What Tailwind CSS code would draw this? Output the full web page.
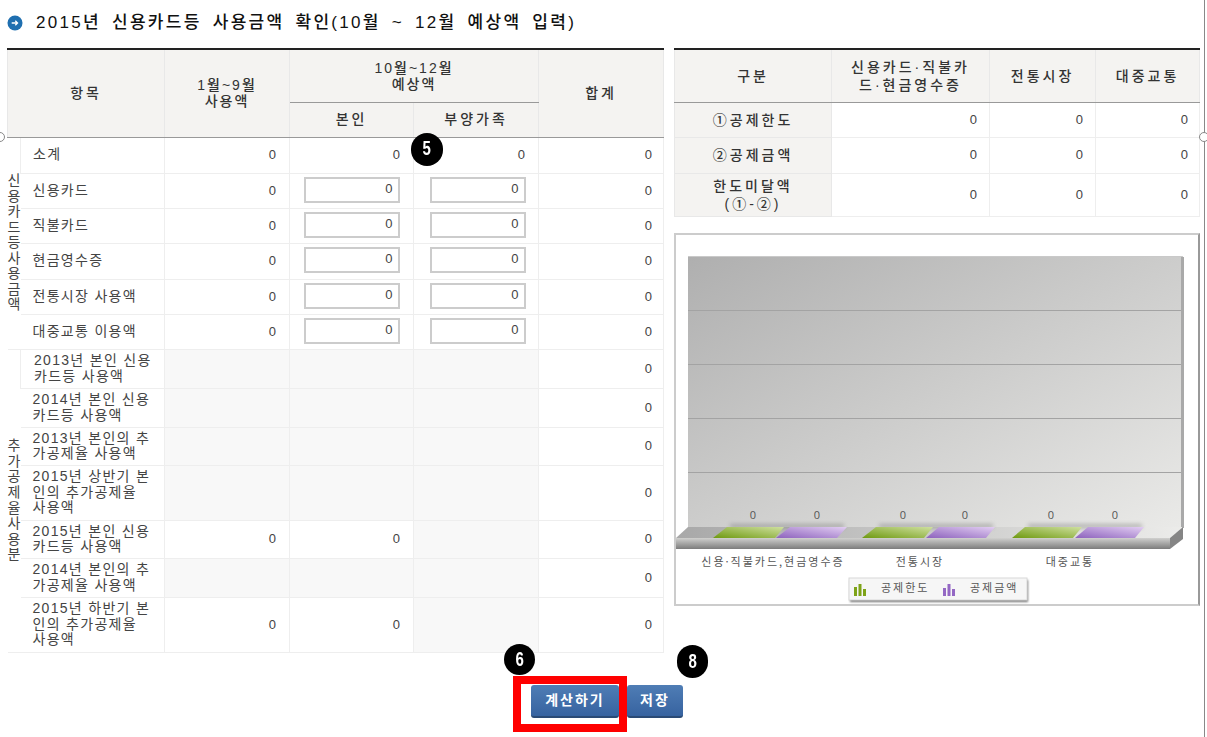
<!DOCTYPE html>
<html lang="ko">
  <head>
    <meta charset="UTF-8" />
    <title>2015년 신용카드등 사용금액 확인</title>
    <script src="https://cdn.jsdelivr.net/npm/@tailwindcss/browser@4"></script>
  </head>
  <body class="bg-white font-['Liberation_Sans','Noto_Sans_CJK_KR',sans-serif] text-[13px] text-[#444]">
    <div class="relative h-[737px] w-[1207px] overflow-hidden pl-[7px]">
      <!-- 제목 -->
      <div class="flex h-[46px] items-center gap-[6px] mb-[2px]">
        <svg class="w-[16px] h-[16px]" viewBox="0 0 17 17">
          <circle cx="8.5" cy="8.5" r="8" fill="#1f6fb0" />
          <path d="M5 8.5h6M8.8 6.2l2.4 2.3-2.4 2.3" fill="none" stroke="#fff" stroke-width="1.4" />
        </svg>
        <h1 class="ml-[7px] text-[17px] font-medium text-[#111] tracking-[2.3px] [word-spacing:4px]">2015년 신용카드등 사용금액 확인(10월 ~ 12월 예상액 입력)</h1>
      </div>

      <div class="flex gap-[10px] items-start">
        <!-- 왼쪽 표 -->
        <table class="w-[656px] table-fixed text-[14px] tracking-[1.3px] [&_td]:border [&_td]:border-[#eee] [&_th]:border [&_th]:border-[#e8e8e8] [&_th]:bg-[#f4f3f1] [&_td.text-right]:text-[13px] [&_td.text-right]:tracking-normal [&_input]:text-[13px] [&_input]:tracking-normal [&_input]:mb-[2px] [&_input]:pb-[3px]">
          <colgroup>
            <col class="w-[13px]" /><col class="w-[144px]" /><col class="w-[125px]" /><col class="w-[124px]" /><col class="w-[125px]" /><col class="w-[125px]" />
          </colgroup>
          <thead class="border-t-2 border-[#222] font-medium text-[#333] tracking-[3px]">
            <tr class="h-[53px]">
              <th colspan="2" rowspan="2" class="font-medium !border-b-[#999]">항목</th>
              <th rowspan="2" class="font-medium leading-[16px] tracking-[2px] !border-b-[#999]">1월~9월<br />사용액</th>
              <th colspan="2" class="font-medium leading-[16px] tracking-[2px] !border-b-[#999]">10월~12월<br />예상액</th>
              <th rowspan="2" class="font-medium !border-b-[#999]">합계</th>
            </tr>
            <tr class="h-[35px]">
              <th class="font-medium !border-b-[#999]">본인</th>
              <th class="font-medium !border-b-[#999]">부양가족</th>
            </tr>
          </thead>
          <tbody class="leading-[15.5px]">
            <tr class="h-[36px]">
              <td rowspan="6" class="!border-x-0 break-all text-center tracking-normal leading-[15.5px]">신용카드등사용금액</td>
              <td class="pl-[12px]">소계</td>
              <td class="text-right pr-[13px]">0</td><td class="text-right pr-[13px]">0</td><td class="text-right pr-[13px]">0</td><td class="text-right pr-[11px]">0</td>
            </tr>
            <tr class="h-[35px]">
              <td class="pl-[12px] !border-l-0">신용카드</td>
              <td class="text-right pr-[13px]">0</td>
              <td class="text-center"><input value="0" class="w-[96px] h-[26px] border-2 border-[#ccc] text-right pr-[5px] align-middle" /></td>
              <td class="text-center"><input value="0" class="ml-[3px] w-[96px] h-[26px] border-2 border-[#ccc] text-right pr-[5px] align-middle" /></td>
              <td class="text-right pr-[11px]">0</td>
            </tr>
            <tr class="h-[35px]">
              <td class="pl-[12px] !border-l-0">직불카드</td>
              <td class="text-right pr-[13px]">0</td>
              <td class="text-center"><input value="0" class="w-[96px] h-[26px] border-2 border-[#ccc] text-right pr-[5px] align-middle" /></td>
              <td class="text-center"><input value="0" class="ml-[3px] w-[96px] h-[26px] border-2 border-[#ccc] text-right pr-[5px] align-middle" /></td>
              <td class="text-right pr-[11px]">0</td>
            </tr>
            <tr class="h-[36px]">
              <td class="pl-[12px] !border-l-0">현금영수증</td>
              <td class="text-right pr-[13px]">0</td>
              <td class="text-center"><input value="0" class="w-[96px] h-[26px] border-2 border-[#ccc] text-right pr-[5px] align-middle" /></td>
              <td class="text-center"><input value="0" class="ml-[3px] w-[96px] h-[26px] border-2 border-[#ccc] text-right pr-[5px] align-middle" /></td>
              <td class="text-right pr-[11px]">0</td>
            </tr>
            <tr class="h-[35px]">
              <td class="pl-[12px] !border-l-0">전통시장 사용액</td>
              <td class="text-right pr-[13px]">0</td>
              <td class="text-center"><input value="0" class="w-[96px] h-[26px] border-2 border-[#ccc] text-right pr-[5px] align-middle" /></td>
              <td class="text-center"><input value="0" class="ml-[3px] w-[96px] h-[26px] border-2 border-[#ccc] text-right pr-[5px] align-middle" /></td>
              <td class="text-right pr-[11px]">0</td>
            </tr>
            <tr class="h-[35px]">
              <td class="pl-[12px] !border-l-0">대중교통 이용액</td>
              <td class="text-right pr-[13px]">0</td>
              <td class="text-center"><input value="0" class="w-[96px] h-[26px] border-2 border-[#ccc] text-right pr-[5px] align-middle" /></td>
              <td class="text-center"><input value="0" class="ml-[3px] w-[96px] h-[26px] border-2 border-[#ccc] text-right pr-[5px] align-middle" /></td>
              <td class="text-right pr-[11px]">0</td>
            </tr>
            <tr class="h-[39px]">
              <td rowspan="7" class="!border-x-0 break-all text-center tracking-normal leading-[15.6px]">추가공제율사용분</td>
              <td class="pl-[13px]">2013년 본인 신용<br />카드등 사용액</td>
              <td class="bg-[#f8f8f8]"></td><td class="bg-[#f8f8f8]"></td><td class="bg-[#f8f8f8]"></td>
              <td class="text-right pr-[11px]">0</td>
            </tr>
            <tr class="h-[39px]">
              <td class="pl-[12px] !border-l-0">2014년 본인 신용<br />카드등 사용액</td>
              <td class="bg-[#f8f8f8]"></td><td class="bg-[#f8f8f8]"></td><td class="bg-[#f8f8f8]"></td>
              <td class="text-right pr-[11px]">0</td>
            </tr>
            <tr class="h-[38px]">
              <td class="pl-[12px] !border-l-0">2013년 본인의 추<br />가공제율 사용액</td>
              <td class="bg-[#f8f8f8]"></td><td class="bg-[#f8f8f8]"></td><td class="bg-[#f8f8f8]"></td>
              <td class="text-right pr-[11px]">0</td>
            </tr>
            <tr class="h-[55px]">
              <td class="pl-[12px] !border-l-0">2015년 상반기 본<br />인의 추가공제율<br />사용액</td>
              <td class="bg-[#f8f8f8]"></td><td class="bg-[#f8f8f8]"></td><td class="bg-[#f8f8f8]"></td>
              <td class="text-right pr-[11px]">0</td>
            </tr>
            <tr class="h-[38px]">
              <td class="pl-[12px] !border-l-0">2015년 본인 신용<br />카드등 사용액</td>
              <td class="text-right pr-[13px]">0</td><td class="text-right pr-[13px]">0</td><td class="bg-[#f8f8f8]"></td>
              <td class="text-right pr-[11px]">0</td>
            </tr>
            <tr class="h-[39px]">
              <td class="pl-[12px] !border-l-0">2014년 본인의 추<br />가공제율 사용액</td>
              <td class="bg-[#f8f8f8]"></td><td class="bg-[#f8f8f8]"></td><td class="bg-[#f8f8f8]"></td>
              <td class="text-right pr-[11px]">0</td>
            </tr>
            <tr class="h-[55px]">
              <td class="pl-[12px] !border-l-0">2015년 하반기 본<br />인의 추가공제율<br />사용액</td>
              <td class="text-right pr-[13px]">0</td><td class="text-right pr-[13px]">0</td><td class="bg-[#f8f8f8]"></td>
              <td class="text-right pr-[11px]">0</td>
            </tr>
          </tbody>
        </table>

        <!-- 오른쪽 -->
        <div class="w-[526px]">
          <table class="w-[525px] table-fixed text-[14px] tracking-[3px] [&_td]:border [&_td]:border-[#eee] [&_td]:text-[13px] [&_td]:tracking-normal [&_th]:border [&_th]:border-[#e8e8e8] [&_th]:bg-[#f4f3f1] [&_th]:font-medium [&_th]:leading-[18px] [&_th]:text-[#333]">
            <colgroup>
              <col class="w-[157px]" /><col class="w-[158px]" /><col class="w-[106px]" /><col class="w-[104px]" />
            </colgroup>
            <thead class="border-t-2 border-[#222]">
              <tr class="h-[53px]">
                <th class="!border-b-[#999]">구분</th>
                <th class="!border-b-[#999]">신용카드·직불카<br />드·현금영수증</th>
                <th class="!border-b-[#999]">전통시장</th>
                <th class="!border-b-[#999]">대중교통</th>
              </tr>
            </thead>
            <tbody>
              <tr class="h-[35px]">
                <th>①공제한도</th>
                <td class="text-right pr-[12px]">0</td><td class="text-right pr-[12px]">0</td><td class="text-right pr-[11px]">0</td>
              </tr>
              <tr class="h-[36px]">
                <th>②공제금액</th>
                <td class="text-right pr-[12px]">0</td><td class="text-right pr-[12px]">0</td><td class="text-right pr-[11px]">0</td>
              </tr>
              <tr class="h-[43px]">
                <th>한도미달액<br />(①-②)</th>
                <td class="text-right pr-[12px]">0</td><td class="text-right pr-[12px]">0</td><td class="text-right pr-[11px]">0</td>
              </tr>
            </tbody>
          </table>

          <!-- 차트 -->
          <div class="mt-[16px] h-[373px] border-2 border-[#ccc] border-r-[#999] overflow-hidden">
            <svg class="block -ml-[2px] -mt-[2px] w-[526px] h-[373px]" viewBox="674 233 526 373">
              <defs>
                <linearGradient id="wall" x1="0" y1="0" x2="1" y2="1">
                  <stop offset="0" stop-color="#afafaf" />
                  <stop offset="1" stop-color="#eaeae8" />
                </linearGradient>
                <linearGradient id="floorTop" x1="0" y1="0" x2="1" y2="0">
                  <stop offset="0" stop-color="#a8a8a8" />
                  <stop offset="1" stop-color="#ececea" />
                </linearGradient>
                <linearGradient id="floorFront" x1="0" y1="0" x2="0" y2="1">
                  <stop offset="0" stop-color="#d0d0ce" />
                  <stop offset="1" stop-color="#7c7c7c" />
                </linearGradient>
                <linearGradient id="green" x1="0" y1="1" x2="1" y2="0">
                  <stop offset="0" stop-color="#6f9a10" />
                  <stop offset="1" stop-color="#cfe0a0" />
                </linearGradient>
                <linearGradient id="purple" x1="0" y1="1" x2="1" y2="0">
                  <stop offset="0" stop-color="#8d62bd" />
                  <stop offset="1" stop-color="#e2cef2" />
                </linearGradient>
                <filter id="soft" x="-20%" y="-100%" width="140%" height="300%"><feGaussianBlur stdDeviation="2.2" /></filter>
                <filter id="legendShadow" x="-5%" y="-20%" width="110%" height="150%"><feGaussianBlur stdDeviation="1.2" /></filter>
              </defs>

              <rect x="688" y="256" width="495" height="272" fill="url(#wall)" />
              <rect x="1181" y="257" width="3" height="271" fill="#a9a9a9" />
              <rect x="688" y="256" width="494" height="1" fill="#c9c9c9" />
              <path d="M688 310.500h493M688 364.500h493M688 418.500h493M688 472.500h493" stroke="#a3a3a3" stroke-width="1" fill="none" />

              <polygon points="688,527 1183,527 1170,538 676,538" fill="url(#floorTop)" />
              <rect x="676" y="538" width="494" height="11" fill="url(#floorFront)" />
              <polygon points="1170,538 1183,527 1183,539 1170,549" fill="#858585" />

              <!-- 막대 그림자 -->
              <g fill="#666" opacity="0.4" filter="url(#soft)">
                <rect x="730" y="524" width="114" height="4" />
                <rect x="879" y="524" width="114" height="4" />
                <rect x="1028" y="524" width="114" height="4" />
              </g>
              <polygon points="713,538 727,527 784,527 775,538" fill="url(#green)" />
              <polygon points="776,538 790,527 847,527 837,538" fill="url(#purple)" />
              <polygon points="862,538 876,527 933,527 924,538" fill="url(#green)" />
              <polygon points="926,538 939,527 995,527 986,538" fill="url(#purple)" />
              <polygon points="1012,538 1025,527 1082,527 1073,538" fill="url(#green)" />
              <polygon points="1075,538 1088,527 1144,527 1135,538" fill="url(#purple)" />

              <g font-size="11" fill="#555" text-anchor="middle" font-family="'Open Sans', sans-serif">
                <text x="753" y="519">0</text><text x="817" y="519">0</text>
                <text x="903" y="519">0</text><text x="965" y="519">0</text>
                <text x="1051" y="519">0</text><text x="1115" y="519">0</text>
              </g>
              <g font-size="11" fill="#555" text-anchor="middle" letter-spacing="2" font-family="'Noto Sans CJK KR', sans-serif">
                <text x="773" y="566">신용·직불카드,현금영수증</text>
                <text x="920" y="566">전통시장</text>
                <text x="1070" y="566">대중교통</text>
              </g>

              <!-- 범례 -->
              <rect x="850" y="580" width="178" height="22" fill="#777" filter="url(#legendShadow)" />
              <rect x="849" y="578" width="178" height="22" fill="#f6f6f6" stroke="#d8d8d8" />
              <path d="M854 587h3v9h-3zM858.500 584h3v12h-3zM863 589h3v7h-3z" fill="#7ea318" />
              <path d="M943 588h3v8h-3zM947.500 584h3v12h-3zM952 589h3v7h-3z" fill="#9468c4" />
              <g font-size="11" fill="#555" letter-spacing="2" font-family="'Noto Sans CJK KR', sans-serif">
                <text x="881" y="592">공제한도</text>
                <text x="970" y="592">공제금액</text>
              </g>
            </svg>
          </div>
        </div>
      </div>

      <!-- 버튼 -->
      <div class="flex gap-[8px] mt-[32px] pl-[524px] text-[14px] text-white font-bold tracking-[2px]">
        <button class="w-[88px] h-[33px] rounded-[3px] bg-gradient-to-b from-[#4f7db5] to-[#3763a0] border-b-2 border-[#2a4a75]">계산하기</button>
        <button class="w-[56px] h-[33px] rounded-[3px] bg-gradient-to-b from-[#4f7db5] to-[#3763a0] border-b-2 border-[#2a4a75]">저장</button>
      </div>

      <!-- 주석 표시 -->
      <div class="absolute left-[513px] top-[676px] w-[114px] h-[56px] border-[8px] border-[#f00]"></div>
      <div class="absolute left-[411px] top-[133px] w-[32px] h-[33px] rounded-full bg-black text-white flex items-center justify-center text-[20px] font-bold"><span class="scale-x-75 -mt-[3px]">5</span></div>
      <div class="absolute left-[504px] top-[644px] w-[31px] h-[31px] rounded-full bg-black text-white flex items-center justify-center text-[20px] font-bold"><span class="scale-x-75 -mt-[2px]">6</span></div>
      <div class="absolute left-[677px] top-[645px] w-[31px] h-[33px] rounded-full bg-black text-white flex items-center justify-center text-[20px] font-bold"><span class="scale-x-75 -mt-[2px]">8</span></div>

      <!-- 선택 핸들 -->
      <div class="absolute left-[1204px] top-0 w-px h-full bg-[#888]"></div>
      <div class="absolute left-[-5px] top-[132px] w-[10px] h-[10px] rounded-full bg-white border border-[#888]"></div>
      <div class="absolute left-[1199px] top-[132px] w-[10px] h-[10px] rounded-full bg-white border border-[#888]"></div>
    </div>
  </body>
</html>
